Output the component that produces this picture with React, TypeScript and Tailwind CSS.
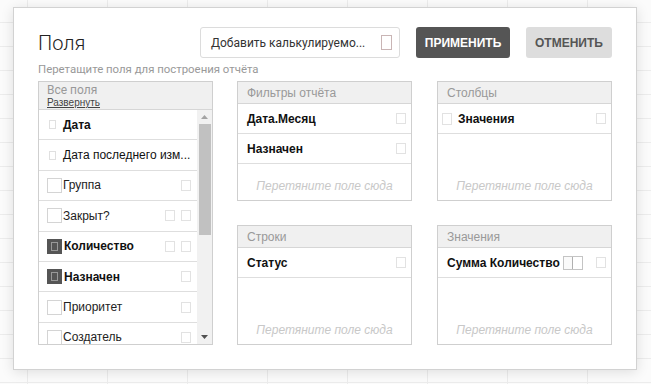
import React from "react";

type Row = {
  label: string;
  bold?: boolean;
  kind: "mini" | "box" | "checked";
  extra?: number;
};

const fields: Row[] = [
  { label: "Дата", bold: true, kind: "mini", extra: 0 },
  { label: "Дата последнего изм...", kind: "mini", extra: 0 },
  { label: "Группа", kind: "box", extra: 1 },
  { label: "Закрыт?", kind: "box", extra: 2 },
  { label: "Количество", bold: true, kind: "checked", extra: 2 },
  { label: "Назначен", bold: true, kind: "checked", extra: 1 },
  { label: "Приоритет", kind: "box", extra: 1 },
  { label: "Создатель", kind: "box", extra: 1 },
];

const Square = () => <span className="block w-[10px] h-[11px] border border-[#e2e2e2] bg-white" />;

const FieldRow = ({ row }: { row: Row }) => (
  <div className="flex items-center h-[30.4px] border-b border-[#dedede] pl-[8px] pr-[6px] shrink-0">
    {row.kind === "mini" && (
      <>
        <span className="block w-[7px] h-[9px] ml-[2px] border border-[#e0e0e0]" />
        <span className={`ml-[7px] text-[12px] text-[#111] ${row.bold ? "font-bold" : ""}`}>{row.label}</span>
      </>
    )}
    {row.kind === "box" && (
      <>
        <span className="block w-[15px] h-[15px] border border-[#d4d4d4] bg-white" />
        <span className="ml-[1px] text-[12px] text-[#222]">{row.label}</span>
      </>
    )}
    {row.kind === "checked" && (
      <>
        <span className="flex items-center justify-center w-[15px] h-[15px] bg-[#555]">
          <span className="block w-[7px] h-[9px] border border-[#999]" />
        </span>
        <span className="ml-[2px] text-[12px] font-bold text-[#111]">{row.label}</span>
      </>
    )}
    <div className="ml-auto flex gap-[6px]">
      {row.extra === 2 && <Square />}
      {row.extra !== 0 && <Square />}
    </div>
  </div>
);

const Placeholder = () => (
  <div className="flex-1 flex items-end justify-center pb-[5px]">
    <span className="text-[12px] italic text-[#c8c8c8]">Перетяните поле сюда</span>
  </div>
);

const Panel = ({ title, children }: { title: string; children: React.ReactNode }) => (
  <div className="flex flex-col h-[120px] border border-[#cfcfcf] bg-white">
    <div className="h-[22px] shrink-0 bg-[#f0f0f0] border-b border-[#d6d6d6] pl-[9px] flex items-center text-[12px] text-[#999]">
      {title}
    </div>
    {children}
  </div>
);

const Item = ({ label, left, split }: { label: string; left?: boolean; split?: boolean }) => (
  <div className="h-[30px] shrink-0 flex items-center border-b border-[#dedede] pl-[9px] pr-[5px]">
    {left && <span className="block w-[10px] h-[12px] -ml-[5px] mr-[6px] border border-[#e2e2e2]" />}
    <span className="text-[12px] font-bold text-[#111]">{label}</span>
    <div className="ml-auto flex items-center gap-[13px]">
      {split && (
        <span className="flex w-[20px] h-[14px] border border-[#c4c4c4]">
          <span className="w-1/2 border-r border-[#b0b0b0] bg-[#fafafa]" />
          <span className="w-1/2" />
        </span>
      )}
      <Square />
    </div>
  </div>
);

export default function App() {
  return (
    <div
      className="w-[651px] h-[384px] overflow-hidden bg-[#fbfbfb] bg-[linear-gradient(to_right,#ececec_1px,transparent_1px),linear-gradient(to_bottom,#ececec_1px,transparent_1px)] [background-size:80px_24px] [background-position:27px_22px] pt-[7px] pl-[13px]"
      style={{ fontFamily: "'Liberation Sans', Arial, sans-serif" }}
    >
      <div className="w-[624px] h-[363px] bg-white border border-[#d2d2d2] shadow-[0_2px_12px_rgba(0,0,0,0.12)] pt-[19px] px-[24px]">
        <div className="flex items-start justify-between h-[31px]">
          <div className="mt-[4px] text-[20px] leading-[24px] text-[#222] font-light" style={{ fontFamily: "Roboto, sans-serif" }}>
            Поля
          </div>
          <div className="flex gap-[16px]">
            <div className="w-[200px] h-[31px] border border-[#dcdcdc] rounded-[3px] flex items-center pl-[10px] pr-[7px]" style={{ fontFamily: "Roboto, sans-serif" }}>
              <span className="text-[12px] text-[#333]">Добавить калькулируемо...</span>
              <span className="ml-auto block w-[11px] h-[15px] border border-[#c9b5b5]" />
            </div>
            <button className="w-[94px] h-[31px] rounded-[3px] bg-[#555] text-white text-[12px] font-bold">ПРИМЕНИТЬ</button>
            <button className="w-[86px] h-[31px] rounded-[3px] bg-[#dddddd] text-[#555] text-[12px] font-bold">ОТМЕНИТЬ</button>
          </div>
        </div>
        <div className="mt-[4px] text-[11.4px] leading-[14px] text-[#999]" style={{ fontFamily: "Roboto, sans-serif" }}>
          Перетащите поля для построения отчёта
        </div>
        <div className="mt-[5px] flex gap-[24px]">
          <div className="w-[175px] h-[264px] border border-[#cfcfcf] flex flex-col">
            <div className="h-[28px] shrink-0 bg-[#f0f0f0] border-b border-[#d6d6d6] pl-[8px] pt-[2px]">
              <div className="text-[12px] leading-[13px] text-[#999]" style={{ fontFamily: "Roboto, sans-serif" }}>Все поля</div>
              <div className="text-[10px] leading-[11px] text-[#444] underline">Развернуть</div>
            </div>
            <div className="flex flex-1 min-h-0">
              <div className="flex-1 flex flex-col overflow-hidden">
                {fields.map((r) => (
                  <FieldRow key={r.label} row={r} />
                ))}
              </div>
              <div className="w-[15px] bg-[#f1f1f1] flex flex-col items-center">
                <svg width="9" height="12" viewBox="0 0 9 12" className="mt-[1px]">
                  <path d="M1 8 L4.5 4 L8 8 Z" fill="#a3a3a3" />
                </svg>
                <div className="mt-[1px] w-[12px] h-[111px] bg-[#c1c1c1]" />
                <div className="flex-1" />
                <svg width="9" height="12" viewBox="0 0 9 12" className="mb-[1px]">
                  <path d="M1 4 L8 4 L4.5 8 Z" fill="#505050" />
                </svg>
              </div>
            </div>
          </div>
          <div className="w-[175px] flex flex-col gap-[24px]">
            <Panel title="Фильтры отчёта">
              <Item label="Дата.Месяц" />
              <Item label="Назначен" />
              <Placeholder />
            </Panel>
            <Panel title="Строки">
              <Item label="Статус" />
              <Placeholder />
            </Panel>
          </div>
          <div className="ml-[1px] w-[175px] flex flex-col gap-[24px]">
            <Panel title="Столбцы">
              <Item label="Значения" left />
              <Placeholder />
            </Panel>
            <Panel title="Значения">
              <Item label="Сумма Количество" split />
              <Placeholder />
            </Panel>
          </div>
        </div>
      </div>
    </div>
  );
}
